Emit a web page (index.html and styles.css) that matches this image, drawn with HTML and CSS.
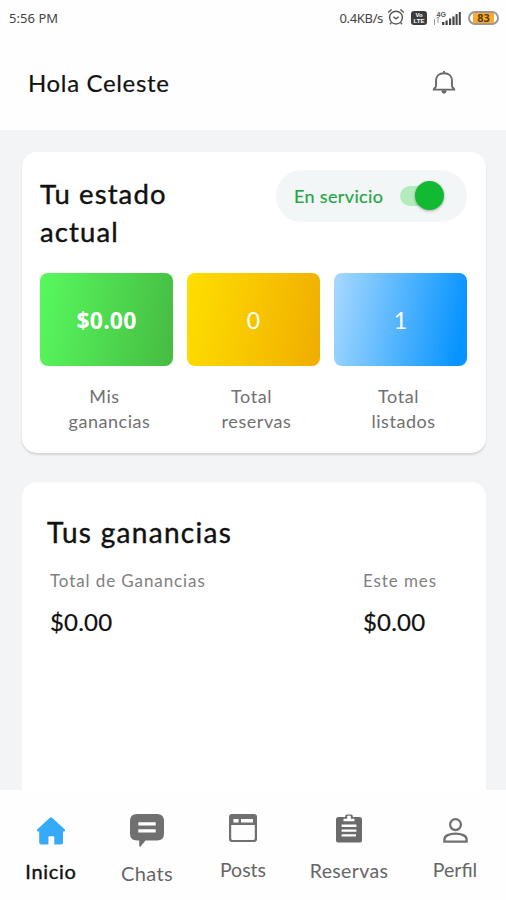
FILE: index.html
```html
<!DOCTYPE html>
<html lang="es">
<head>
<meta charset="utf-8">
<title>Inicio</title>
<link rel="stylesheet" href="styles.css">
</head>
<body>
<div class="app">
  <div class="status">
    <span class="clock">5:56 PM</span>
    <span class="rate">0.4KB/s</span>
    <svg class="alarm" width="18" height="18" viewBox="0 0 18 18" fill="none" stroke="#555" stroke-width="1.4"><circle cx="9" cy="9.6" r="6.4"/><path d="M1.2 4.6 4.6 1.6M16.8 4.6 13.4 1.6M6.4 8.8 9 10.8 11.8 8.8M4.2 14.8 3 16.2M13.8 14.8 15 16.2"/></svg>
    <span class="volte"><span>Vo</span><span>LTE</span></span>
    <svg class="signal" width="28" height="16" viewBox="0 0 28 16"><g fill="#444"><path d="M9 12h2.4v3H9zM12.5 10.5h2.2V15h-2.2zM16 8.5h2.2V15H16zM19.4 6.5h2.2V15h-2.2zM22.6 4h2v11h-2zM25.8 2h2v13h-2z"/></g><path d="M1.5 9v6M5 13V7M3.8 8.4 5 7l1.2 1.4" fill="none" stroke="#999" stroke-width="1"/><text class="net" x="3.5" y="7">4G</text></svg>
    <span class="battery"><span class="charge">83</span></span>
  </div>
  <header class="header">
    <h1>Hola Celeste</h1>
    <svg width="24" height="26" viewBox="0 0 24 26" fill="none" stroke="#686868" stroke-width="1.9" stroke-linejoin="round"><path d="M12 3.2C7.2 3.2 4 6.2 4 10.6V16.4L1.6 19.6H22.4L20 16.4V10.6C20 6.2 16.8 3.2 12 3.2Z"/><path d="M12 1v2M10.4 21.2c.3 2.2 2.9 2.2 3.2 0z" fill="#686868"/></svg>
  </header>
  <main class="content">
    <section class="card state">
      <div class="state-head">
        <h2>Tu estado actual</h2>
        <div class="pill"><span class="pill-text">En servicio</span><span class="switch"><span class="thumb"></span></span></div>
      </div>
      <div class="tiles">
        <div class="tile"><div class="box green">$0.00</div><p><span class="l1">Mis</span><span class="l2">ganancias</span></p></div>
        <div class="tile"><div class="box yellow">0</div><p><span class="l1">Total</span><span class="l2">reservas</span></p></div>
        <div class="tile"><div class="box blue">1</div><p><span class="l1">Total</span><span class="l2">listados</span></p></div>
      </div>
    </section>
    <section class="card earn">
      <h2>Tus ganancias</h2>
      <div class="cols">
        <div class="total"><span class="label">Total de Ganancias</span><span class="value">$0.00</span></div>
        <div class="month"><span class="label">Este mes</span><span class="value">$0.00</span></div>
      </div>
    </section>
  </main>
  <nav class="nav">
    <a class="item home"><svg width="30" height="28" viewBox="0 0 30 28"><path fill="#35aaf8" d="M16.4 .9 28.6 12.3C29.6 13.4 29 14.6 27.6 14.6H27V25.4Q27 27.5 24.9 27.5H18.3V20.3Q18.3 19.3 17.3 19.3H13.4Q12.4 19.3 12.4 20.3V27.5H5.3Q3.2 27.5 3.2 25.4V14.6H2.4C1 14.6.5 13.3 1.4 12.3L13.6 .9Q15-.4 16.4 .9Z"/></svg><span>Inicio</span></a>
    <a class="item chats"><svg width="34" height="33" viewBox="0 0 34 33"><path fill="#707070" d="M7 0H27Q34 0 34 7V19.5Q34 26.5 27 26.5H15.5L10.5 32.5Q9.5 33.3 9.2 31.8V26.5H7Q0 26.5 0 19.5V7Q0 0 7 0Z"/><path stroke="#fff" stroke-width="3.3" d="M8.3 9.9H25.7M8.3 16.9H25.7"/></svg><span>Chats</span></a>
    <a class="item posts"><svg width="28" height="28" viewBox="0 0 28 28"><path fill="#707070" fill-rule="evenodd" d="M3 0H25Q28 0 28 3V25Q28 28 25 28H3Q0 28 0 25V3Q0 0 3 0ZM4.4 5V8.6H9.6V5ZM12 5V8.6H24V5ZM2.2 11V24.6Q2.2 26 3.6 26H24.4Q25.8 26 25.8 24.6V11Z"/></svg><span>Posts</span></a>
    <a class="item bookings"><svg width="26" height="29" viewBox="0 0 26 29"><path fill="#6b6b6b" d="M2.6 3H9.2V2Q9.2.4 10.8.4H15.2Q16.8.4 16.8 2V3H23.4Q26 3 26 5.6V26Q26 28.6 23.4 28.6H2.6Q0 28.6 0 26V5.6Q0 3 2.6 3Z"/><path fill="#fff" d="M11.2 1.8H14.8V4.7H18.5V7.2H7.5V4.7H11.2ZM5.6 10.6H20.4V13H5.6ZM5.6 15.4H20.4V17.8H5.6ZM5.6 20.2H20V22.6H5.6Z"/></svg><span>Reservas</span></a>
    <a class="item profile"><svg width="25" height="25" viewBox="0 0 25 25" fill="none" stroke="#707070" stroke-width="2.3"><circle cx="12.5" cy="6.6" r="5.4"/><path d="M1.4 23.6V21.4C1.4 17.8 6.6 15.6 12.5 15.6S23.6 17.8 23.6 21.4V23.6Z"/></svg><span>Perfil</span></a>
  </nav>
</div>
</body>
</html>
```
FILE: styles.css
```css
* { box-sizing: border-box; margin: 0; padding: 0; }
body { font-family: Lato, "Liberation Sans", sans-serif; color: #111; background: #fefefe; }
svg { display: block; flex: none; }
.app { width: 506px; height: 900px; display: flex; flex-direction: column; overflow: hidden; }
.status { flex: none; height: 36px; display: flex; align-items: center; padding: 0 7px 0 9px; font: 13px/36px "Noto Sans", sans-serif; color: #444; }
.clock { flex: 1; letter-spacing: .05px; }
.rate { letter-spacing: -.35px; margin-right: 4px; }
.alarm { margin: -2px 6px 0 0; }
.volte { width: 16px; height: 14px; border-radius: 3px; background: #3c3c3c; color: #fff; font: bold 6px/6px "Liberation Sans", sans-serif; text-align: center; margin-right: 6px; padding-top: 1px; }
.volte span { display: block; }
.signal { margin-right: 7px; }
.net { font: bold 7px "Liberation Sans", sans-serif; fill: #555; }
.battery { width: 31px; height: 14px; border: 2px solid #999; border-radius: 7px; display: flex; justify-content: center; background: #fff; }
.charge { width: 21px; height: 10px; background: #f9ac2c; font: bold 11px/10px "Noto Sans", sans-serif; text-align: center; color: #5b3a12; }
.header { flex: none; height: 94px; padding: 0 50px 0 28px; display: flex; align-items: center; justify-content: space-between; }
.header h1 { font-size: 24px; font-weight: 400; line-height: 30px; letter-spacing: .65px; -webkit-text-stroke: .2px; }
.content { flex: 1; min-height: 0; overflow: hidden; background: #f2f4f6; padding: 22px 20px 0 22px; display: flex; flex-direction: column; gap: 29px; }
.card { flex: none; background: #fff; border-radius: 15px; }
h2 { font-size: 27.5px; font-weight: 400; letter-spacing: 1.1px; -webkit-text-stroke: .4px; }
.state { height: 301px; padding: 18px 19px 0 18px; box-shadow: 0 2px 2px #d3d5d7; }
.state-head { display: flex; justify-content: space-between; height: 103px; }
.state-head h2 { width: 150px; line-height: 38px; margin-top: 5px; }
.pill { width: 191px; height: 52px; border-radius: 26px; background: #f2f6f6; display: flex; align-items: center; padding-left: 18px; }
.pill-text { width: 106px; font-size: 18px; color: #26a546; letter-spacing: .35px; white-space: nowrap; -webkit-text-stroke: .2px; }
.switch { width: 42px; height: 20px; border-radius: 10px; background: #b3ebbd; display: flex; align-items: center; justify-content: flex-end; }
.thumb { width: 29px; height: 29px; border-radius: 50%; background: #12b932; box-shadow: 0 1px 3px #0005; margin: -1px -2px 0 0; flex: none; }
.tiles { display: grid; grid-template-columns: repeat(3, 133px); gap: 14px; }
.box { height: 93px; border-radius: 8px; color: #fff; font-size: 23px; display: flex; align-items: center; justify-content: center; }
.green { background: linear-gradient(100deg, #58f95e, #46bb42); font-weight: 700; font-family: "Noto Sans", sans-serif; letter-spacing: .2px; }
.yellow { background: linear-gradient(100deg, #ffdf00, #f0ad00); }
.blue { background: linear-gradient(100deg, #a8d9ff, #0894ff 92%); }
.tile p { margin-top: 18px; font-size: 18px; line-height: 25px; color: #707070; text-align: center; letter-spacing: .55px; }
.tile span { display: block; }
.l1 { padding-right: 4px; }
.l2 { padding-left: 6px; }
.earn { height: 340px; padding: 31px 25px 0 25px; }
.earn h2 { line-height: 38px; font-size: 28px; letter-spacing: 1.3px; }
.cols { display: grid; grid-template-columns: 313px 1fr; padding: 17px 0 0 3px; }
.label, .value { display: block; }
.label { font-size: 17px; line-height: 26px; color: #808080; letter-spacing: .9px; }
.value { font-size: 24px; line-height: 34px; margin-top: 11px; letter-spacing: .2px; -webkit-text-stroke: .2px; }
.nav { flex: none; height: 110px; background: #fefefe; display: grid; grid-template-columns: 102px 90px 102px 110px 102px; }
.item { display: flex; flex-direction: column; align-items: center; justify-content: space-between; height: 93px; padding-top: 24px; color: #666; font-size: 19.5px; line-height: 24px; letter-spacing: .4px; }
.home { color: #111; padding-top: 27px; font-size: 20px; letter-spacing: .7px; -webkit-text-stroke: .4px; }
.chats { height: 95px; font-size: 20px; }
.posts, .profile { height: 92px; letter-spacing: 0; }
.bookings { height: 93px; letter-spacing: .35px; }
.profile { padding-top: 28px; }
```
